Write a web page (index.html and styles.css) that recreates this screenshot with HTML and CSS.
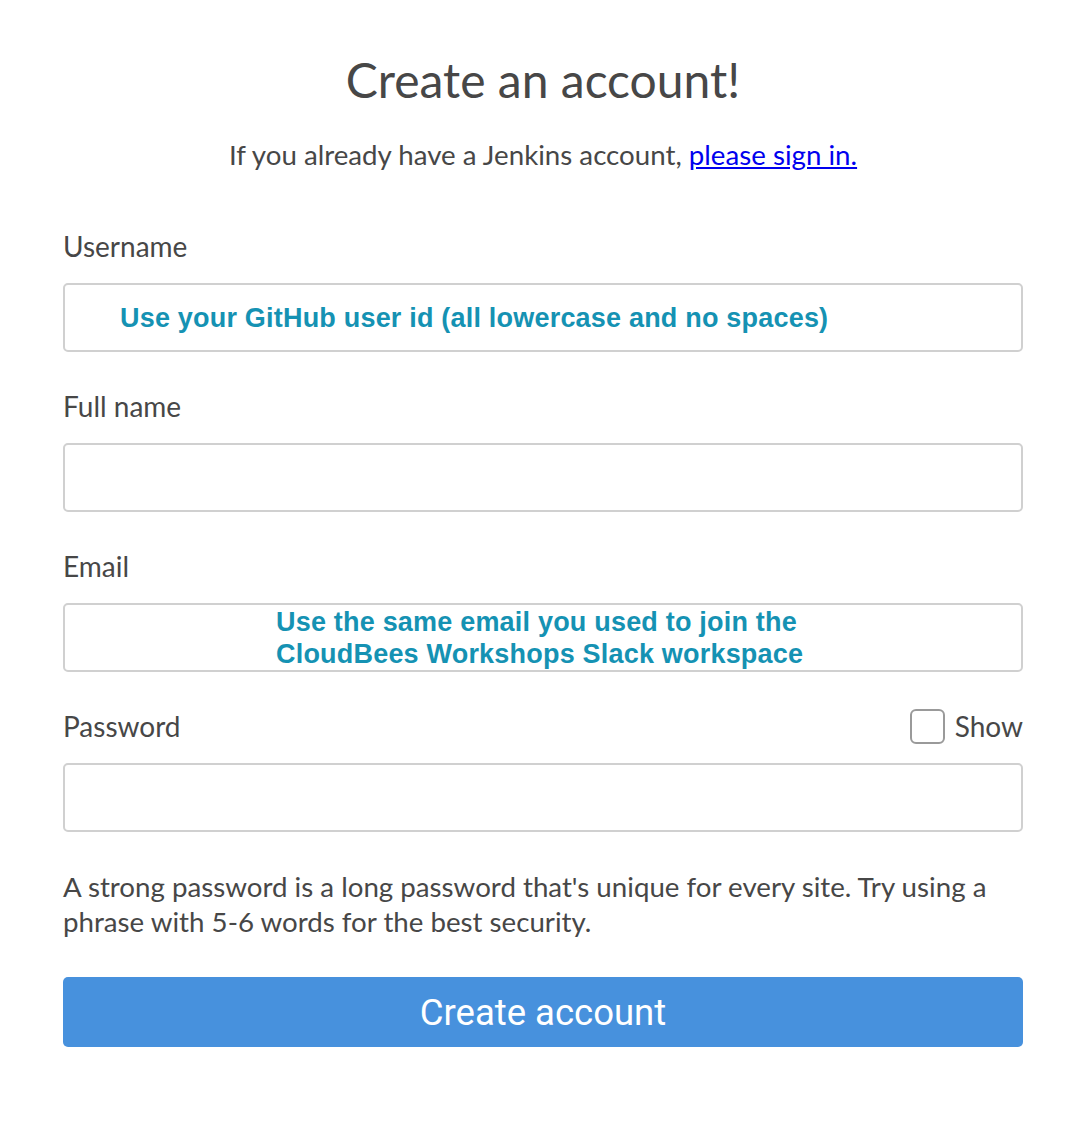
FILE: index.html
```html
<!DOCTYPE html>
<html>
<head>
<meta charset="utf-8">
<link rel="stylesheet" href="styles.css">
</head>
<body>
<main class="page">
  <h1 class="title">Create an account!</h1>
  <p class="subtitle">If you already have a Jenkins account, <a href="#">please sign in.</a></p>
  <form class="form">
    <div class="field">
      <div class="label-row"><label>Username</label></div>
      <div class="input hint-left"><span class="hint">Use your GitHub user id (all lowercase and no spaces)</span></div>
    </div>
    <div class="field">
      <div class="label-row"><label>Full name</label></div>
      <div class="input"></div>
    </div>
    <div class="field">
      <div class="label-row"><label>Email</label></div>
      <div class="input hint-email"><span class="hint hint-two">Use the same email you used to join the<br>CloudBees Workshops Slack workspace</span></div>
    </div>
    <div class="field">
      <div class="label-row">
        <label>Password</label>
        <span class="show"><span class="checkbox"></span>Show</span>
      </div>
      <div class="input"></div>
    </div>
    <p class="help">A strong password is a long password that's unique for every site. Try using a phrase with 5-6 words for the best security.</p>
    <div class="button">Create account</div>
  </form>
</main>
</body>
</html>
```
FILE: styles.css
```css
html, body {
  margin: 0;
  padding: 0;
  background: #fff;
}
body {
  font-family: Lato, "Noto Sans", sans-serif;
  color: #474747;
}
.page {
  width: 960px;
  margin: 0 auto;
  padding-top: 50px;
}
.title {
  margin: 0;
  text-align: center;
  font-size: 48px;
  font-weight: 400;
  line-height: 60px;
  color: #474747;
}
.subtitle {
  margin: 27px 0 0;
  text-align: center;
  font-size: 27.7px;
  line-height: 36px;
}
.subtitle a {
  color: #0000ee;
  text-decoration: underline;
}
.form {
  margin-top: 55px;
  display: flex;
  flex-direction: column;
}
.field {
  display: flex;
  flex-direction: column;
  gap: 19px;
  margin-bottom: 36px;
}
.label-row {
  display: flex;
  justify-content: space-between;
  align-items: center;
  font-size: 28px;
  line-height: 36px;
  height: 36px;
}
.input {
  box-sizing: border-box;
  height: 69px;
  border: 2px solid #d0d0d0;
  border-radius: 5px;
  background: #fff;
  display: flex;
  align-items: center;
}
.hint {
  font-family: "Liberation Sans", Arial, sans-serif;
  font-weight: 700;
  color: #1592b3;
  font-size: 27px;
  letter-spacing: 0.2px;
  position: relative;
  top: 1px;
}
.hint-left {
  padding-left: 55px;
}
.hint-email {
  padding-left: 211px;
}
.hint-two {
  line-height: 32px;
  top: 0;
}
.show {
  display: flex;
  align-items: center;
  gap: 10px;
}
.checkbox {
  box-sizing: border-box;
  width: 35px;
  height: 35px;
  border: 2px solid #9a9a9a;
  border-radius: 6px;
  background: #fff;
}
.help {
  margin: 1px 0 0;
  font-size: 27.7px;
  line-height: 35px;
}
.button {
  margin-top: 38px;
  height: 70px;
  border-radius: 5px;
  background: #4791dd;
  color: #fff;
  font-family: Roboto, "Liberation Sans", sans-serif;
  font-size: 36.5px;
  display: flex;
  align-items: center;
  justify-content: center;
}
```
